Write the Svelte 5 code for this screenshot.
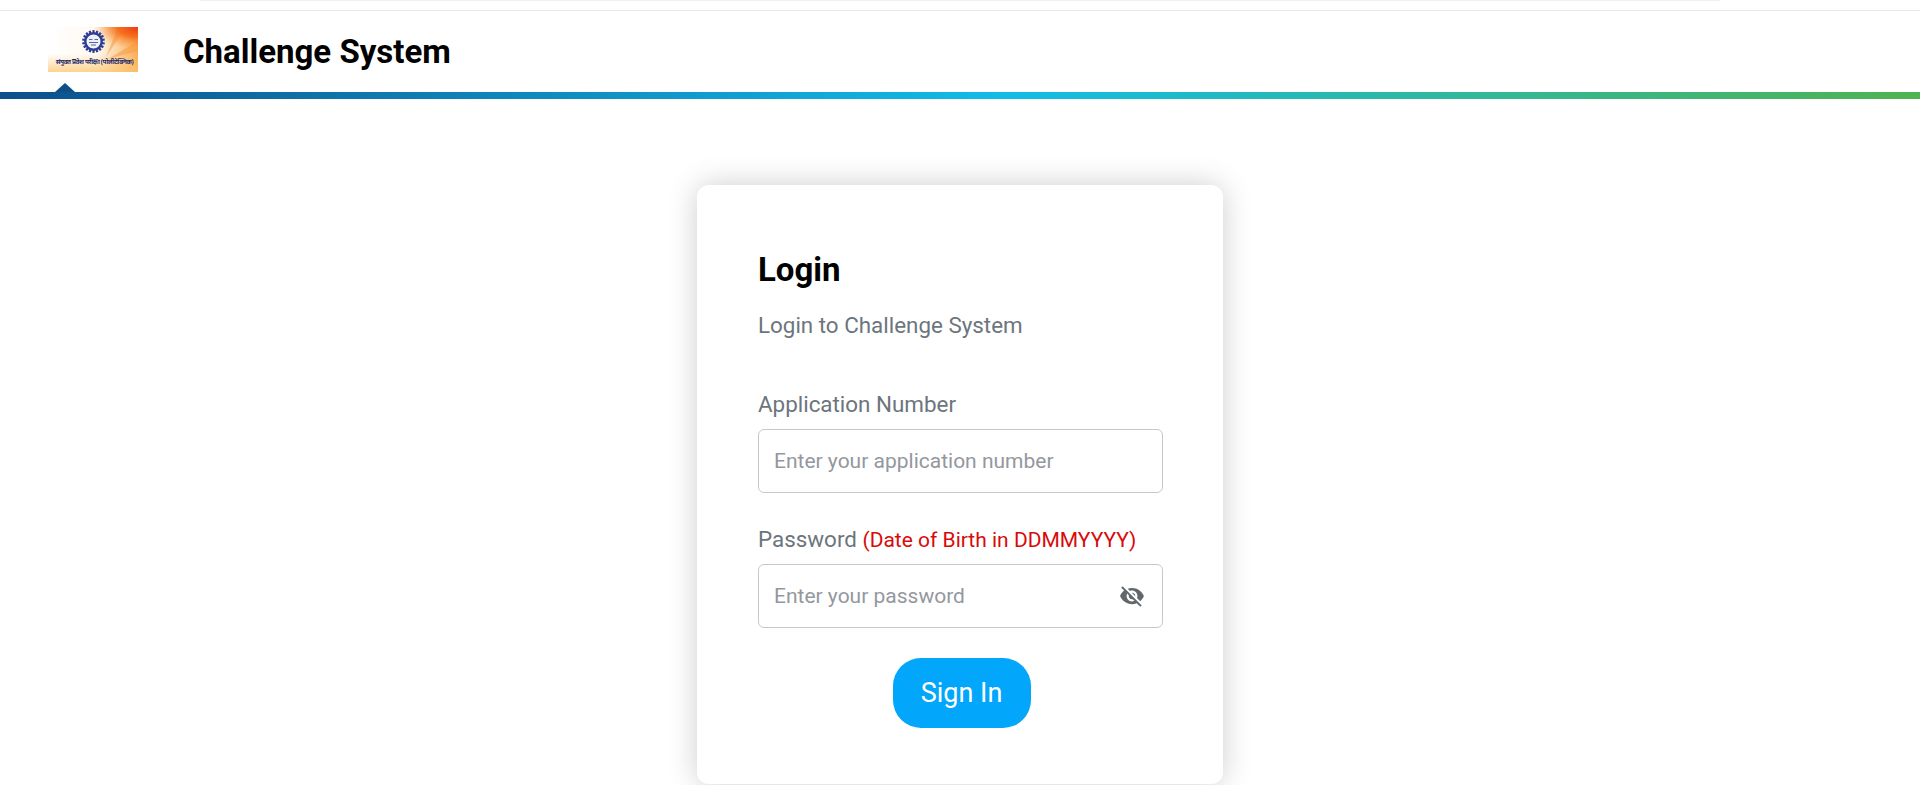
<script>
  let appNumber = "";
  let password = "";
  let showPassword = false;

  const togglePassword = () => {
    showPassword = !showPassword;
  };

  const gearTeeth = Array.from({ length: 18 }, (_, i) => i * 20);
</script>

<div class="page">
  <div class="top-strip"><div class="top-inner"></div></div>

  <header class="header">
    <div class="logo">
      <svg viewBox="0 0 90 45" width="90" height="45" aria-label="logo">
        <defs>
          <linearGradient id="logoBg" x1="0" y1="0" x2="1" y2="0">
            <stop offset="0" stop-color="#ffffff" />
            <stop offset="0.55" stop-color="#fff9f0" />
            <stop offset="0.72" stop-color="#fddcb4" />
            <stop offset="1" stop-color="#f9ad58" />
          </linearGradient>
          <linearGradient id="logoBottom" x1="0" y1="0" x2="0" y2="1">
            <stop offset="0.6" stop-color="#fcc56e" stop-opacity="0" />
            <stop offset="1" stop-color="#fcc56e" stop-opacity="0.75" />
          </linearGradient>
          <radialGradient id="logoCorner" cx="1" cy="0" r="0.5">
            <stop offset="0" stop-color="#ee3a12" />
            <stop offset="0.45" stop-color="#f6701f" />
            <stop offset="1" stop-color="#f9a54a" stop-opacity="0" />
          </radialGradient>
        </defs>
        <rect width="90" height="45" fill="url(#logoBg)" />
        <rect width="90" height="45" fill="url(#logoBottom)" />
        <path d="M58 30 L70 0 L78 0 Z M60 32 L90 14 L90 24 Z" fill="#f8953a" opacity="0.5" />
        <rect width="90" height="45" fill="url(#logoCorner)" />
        <g transform="translate(45.5 14.5)">
          {#each gearTeeth as deg}
            <rect x="-1.1" y="-11.4" width="2.2" height="3" fill="#2c3d96" transform="rotate({deg})" />
          {/each}
          <circle r="8.2" fill="none" stroke="#2c3d96" stroke-width="2.4" />
          <circle r="6.2" fill="#eef0f8" />
          <path d="M-4.5 -2 L-1 -2 M1 -2 L4.5 -2 M-4.5 1 L4.5 1 M-2.5 3.5 L2.5 3.5" stroke="#5666b0" stroke-width="1.1" />
        </g>
        <text x="46.5" y="37" textLength="78" class="logo-text">संयुक्त प्रवेश परीक्षा (पोलीटेक्निक)</text>
      </svg>
    </div>
    <h1 class="title">Challenge System</h1>
    <span class="notch"></span>
  </header>
  <div class="rule"></div>

  <main class="main">
    <div class="card">
      <h2>Login</h2>
      <p class="sub">Login to Challenge System</p>

      <label for="app-no" class="first">Application Number</label>
      <div class="field">
        <input id="app-no" type="text" placeholder="Enter your application number" bind:value={appNumber} />
      </div>

      <label for="pwd">Password <span class="hint">(Date of Birth in DDMMYYYY)</span></label>
      <div class="field">
        <input id="pwd" type={showPassword ? "text" : "password"} placeholder="Enter your password" bind:value={password} />
        <button class="eye" type="button" on:click={togglePassword} aria-label="Show password">
          <svg viewBox="0 0 24 24" width="26" height="26">
            <path fill="#62676b" d="M12 7c2.76 0 5 2.24 5 5 0 .65-.13 1.26-.36 1.83l2.92 2.92c1.51-1.26 2.7-2.89 3.43-4.75-1.73-4.39-6-7.5-11-7.5-1.4 0-2.74.25-3.98.7l2.16 2.16C10.74 7.13 11.35 7 12 7zM2 4.27l2.28 2.28.46.46C3.08 8.3 1.78 10.02 1 12c1.73 4.39 6 7.5 11 7.5 1.55 0 3.03-.3 4.38-.84l.42.42L19.73 22 21 20.73 3.27 3 2 4.27zM7.53 9.8l1.55 1.55c-.05.21-.08.43-.08.65 0 1.66 1.34 3 3 3 .22 0 .44-.03.65-.08l1.55 1.55c-.67.33-1.41.53-2.2.53-2.76 0-5-2.24-5-5 0-.79.2-1.53.53-2.2zm4.31-.78l3.15 3.15.02-.16c0-1.66-1.34-3-3-3l-.17.01z" />
          </svg>
        </button>
      </div>

      <div class="actions">
        <button class="submit" type="button">Sign In</button>
      </div>
    </div>
  </main>
</div>

<style>
  :global(body) {
    margin: 0;
    background: #fff;
    overflow: hidden;
  }

  .page {
    height: 785px;
    overflow: hidden;
    font-family: Roboto, "Liberation Sans", sans-serif;
    color: #6c757d;
  }

  .top-strip {
    height: 10px;
    border-bottom: 1px solid #e8e8e8;
  }

  .top-inner {
    width: 1520px;
    height: 1px;
    margin: 0 auto;
    background: #f2f2f2;
  }

  .header {
    position: relative;
    height: 81px;
    display: flex;
    align-items: center;
    padding-left: 48px;
  }

  .logo {
    display: flex;
    margin-bottom: 5px;
  }

  .logo-text {
    font-family: "Noto Sans", "DejaVu Sans", sans-serif;
    font-size: 6.4px;
    font-weight: 700;
    fill: #1d2a6b;
    text-anchor: middle;
  }

  .title {
    margin: 0 0 0 45px;
    font-size: 33px;
    font-weight: 700;
    color: #000;
  }

  .notch {
    position: absolute;
    left: 55px;
    bottom: 0;
    width: 0;
    height: 0;
    border-left: 10px solid transparent;
    border-right: 10px solid transparent;
    border-bottom: 9px solid #0f4f88;
  }

  .rule {
    height: 7px;
    background: linear-gradient(90deg, #0d4f8b 0%, #12bce8 52%, #4fb350 100%);
  }

  .main {
    display: flex;
    justify-content: center;
    padding-top: 86px;
  }

  .card {
    width: 526px;
    box-sizing: border-box;
    padding: 64px 60px 56px 61px;
    background: #fff;
    border-radius: 12px;
    box-shadow: 0 0 30px rgba(0, 0, 0, 0.2);
  }

  h2 {
    margin: 0;
    font-size: 33px;
    line-height: 42px;
    font-weight: 700;
    color: #000;
  }

  .sub {
    margin: 19px 0 0;
    font-size: 22.4px;
    line-height: 30px;
  }

  label {
    display: block;
    margin: 31px 0 9px;
    font-size: 22.4px;
    line-height: 30px;
  }

  label.first {
    margin-top: 49px;
    margin-bottom: 10px;
  }

  .hint {
    color: #d90a0a;
    font-size: 21px;
  }

  .field {
    position: relative;
  }

  input {
    display: block;
    width: 100%;
    height: 64px;
    box-sizing: border-box;
    padding: 0 15px;
    border: 1px solid #c6c8cc;
    border-radius: 6px;
    outline: none;
    font-family: inherit;
    font-size: 21px;
    color: #495057;
  }

  input::placeholder {
    color: #94979e;
    opacity: 1;
  }

  .eye {
    position: absolute;
    top: 19px;
    right: 18px;
    display: flex;
    padding: 0;
    border: 0;
    background: transparent;
    cursor: pointer;
  }

  .actions {
    display: flex;
    justify-content: center;
    margin-top: 30px;
    padding-left: 2px;
  }

  .submit {
    width: 138px;
    height: 70px;
    border: 0;
    border-radius: 28px;
    background: #02a6fb;
    color: #fff;
    font-family: inherit;
    font-size: 27px;
    cursor: pointer;
  }
</style>
